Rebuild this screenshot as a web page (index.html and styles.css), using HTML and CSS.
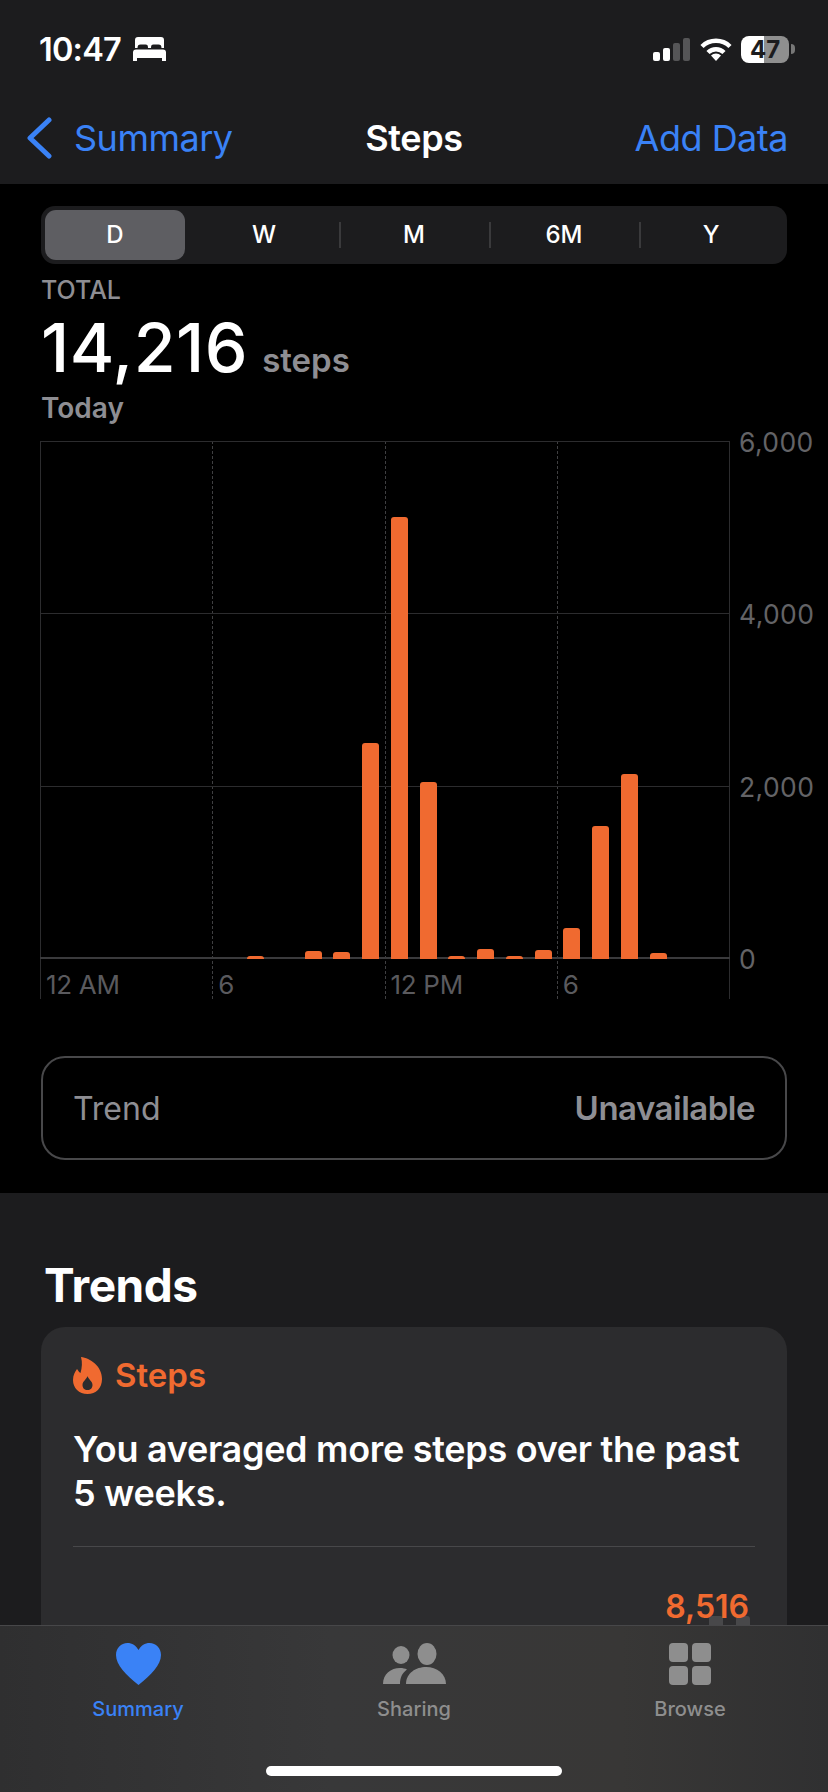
FILE: index.html
```html
<!DOCTYPE html>
<html lang="en">
<head>
<meta charset="UTF-8">
<meta name="viewport" content="width=device-width, initial-scale=1.0">
<title>Steps</title>
<link rel="stylesheet" href="styles.css">
</head>
<body>
<div class="screen">
    <div class="scroll">
        <header class="top">
            <div class="status">
                <div class="status-left">
                    <span class="time">10:47</span>
                    <svg class="bed" viewBox="0 0 33 24" fill="#fff" fill-rule="evenodd">
                        <path d="M5 0h23a3 3 0 0 1 3 3v8h-2.500c0-2.500-1-3.500-3-3.500h-5c-2 0-2.500 1-2.500 3.500h-3c0-2.500-.5-3.500-2.500-3.500h-5c-2 0-3 1-3 3.500H2V3a3 3 0 0 1 3-3z"/>
                        <path d="M3 12.500h27a3 3 0 0 1 3 3V21H0v-5.500a3 3 0 0 1 3-3z"/>
                        <rect x="0" y="21" width="4" height="3"/>
                        <rect x="29" y="21" width="4" height="3"/>
                    </svg>
                </div>
                <div class="status-right">
                    <div class="signal">
                        <span class="sig sig1"></span>
                        <span class="sig sig2"></span>
                        <span class="sig sig3"></span>
                        <span class="sig sig4"></span>
                    </div>
                    <svg class="wifi" viewBox="0 0 32 24" fill="none" stroke="#fff" stroke-width="4.500">
                        <path d="M2 9.500a20 20 0 0 1 28 0"/>
                        <path d="M8 15.500a11.500 11.500 0 0 1 16 0"/>
                        <path d="M16 24l-5-5.500a7 7 0 0 1 10 0z" fill="#fff" stroke="none"/>
                    </svg>
                    <div class="battery">
                        <div class="battery-body">47</div>
                        <div class="battery-nub"></div>
                    </div>
                </div>
            </div>
            <nav class="nav">
                <div class="back">
                    <svg class="chevron" viewBox="0 0 26 42" fill="none" stroke="#3a82f6" stroke-width="5" stroke-linecap="round" stroke-linejoin="round">
                        <path d="M23 3L4 21l19 18"/>
                    </svg>
                    <span>Summary</span>
                </div>
                <div class="nav-title">Steps</div>
                <div class="nav-action">Add Data</div>
            </nav>
        </header>

        <section class="detail">
            <div class="segments">
                <div class="seg active">D</div>
                <div class="seg">W</div>
                <div class="seg divided">M</div>
                <div class="seg divided">6M</div>
                <div class="seg divided">Y</div>
            </div>

            <div class="total-label">TOTAL</div>
            <div class="total"><span class="total-num">14,216</span><span class="total-unit">steps</span></div>
            <div class="total-date">Today</div>

            <div class="chart">
                <div class="plot">
                    <div class="vlines">
                        <div class="vcell">12 AM</div>
                        <div class="vcell">6</div>
                        <div class="vcell">12 PM</div>
                        <div class="vcell">6</div>
                    </div>
                    <div class="hlines">
                        <div class="hrow"></div>
                        <div class="hrow"></div>
                        <div class="hrow"></div>
                    </div>
                    <div class="bars">
                        <div></div><div></div><div></div><div></div><div></div><div></div><div></div>
                        <div class="bar" style="height: 3px"></div>
                        <div></div>
                        <div class="bar" style="height: 8px"></div>
                        <div class="bar" style="height: 7px"></div>
                        <div class="bar" style="height: 216px"></div>
                        <div class="bar" style="height: 442px"></div>
                        <div class="bar" style="height: 177px"></div>
                        <div class="bar" style="height: 3px"></div>
                        <div class="bar" style="height: 10px"></div>
                        <div class="bar" style="height: 3px"></div>
                        <div class="bar" style="height: 9px"></div>
                        <div class="bar" style="height: 31px"></div>
                        <div class="bar" style="height: 133px"></div>
                        <div class="bar" style="height: 185px"></div>
                        <div class="bar" style="height: 6px"></div>
                        <div></div><div></div>
                    </div>
                </div>
                <div class="ylabels">
                    <span>6,000</span>
                    <span>4,000</span>
                    <span>2,000</span>
                    <span>0</span>
                </div>
            </div>

            <div class="trend-box">
                <span class="trend-name">Trend</span>
                <span class="trend-value">Unavailable</span>
            </div>
        </section>

        <section class="trends">
            <h2>Trends</h2>
            <div class="card">
                <div class="card-head">
                    <svg class="flame" viewBox="0 0 29 37" fill="#f06a30" fill-rule="evenodd">
                        <path d="M8 0c9 1 21 9 21 22 0 9-6 15-14.500 15S0 31 0 23c0-5 2-8 4-11 1 1.500 2 3 3.500 4C9 11 9.500 5 8 0zM14.500 19c-.5 3-5 5-5 9 0 3 2 5 5 5s5-2 5-5c0-4-4.500-6-5-9z"/>
                    </svg>
                    <span>Steps</span>
                </div>
                <p class="card-text">You averaged more steps over the past 5 weeks.</p>
                <div class="card-line"></div>
                <div class="card-value">8,516</div>
                <div class="mini-bars">
                    <div class="mini-bar"></div>
                    <div class="mini-bar"></div>
                </div>
            </div>
        </section>
    </div>

    <footer class="tabbar">
        <div class="tabs">
            <div class="tab tab-on">
                <svg class="tab-icon" width="45" height="42" viewBox="0 0 45 42" fill="#3a82f6">
                    <path d="M22.500 42C10 32 0 22 0 12 0 5 5 0 11.500 0 16 0 20 2.500 22.500 7 25 2.500 29 0 33.500 0 40 0 45 5 45 12c0 10-10 20-22.500 30z"/>
                </svg>
                <span>Summary</span>
            </div>
            <div class="tab">
                <svg class="tab-icon" width="63" height="42" viewBox="0 0 63 42" fill="#8e8e8e">
                    <ellipse cx="18" cy="12" rx="8.500" ry="9"/>
                    <ellipse cx="44" cy="11" rx="9.500" ry="11"/>
                    <path d="M23 41c0-11 10-17 20-17 11 0 20 7 20 17z"/>
                    <path d="M0 41c0-10 8-16 17-16 3 0 5 .5 7 1.500C19 30 17 35 17 41z"/>
                </svg>
                <span>Sharing</span>
            </div>
            <div class="tab">
                <div class="tab-icon grid-icon">
                    <div></div><div></div><div></div><div></div>
                </div>
                <span>Browse</span>
            </div>
        </div>
        <div class="home"></div>
    </footer>
</div>
</body>
</html>
```

FILE: styles.css
```css
body {
    margin: 0;
    background-color: #000000;
    color: #ffffff;
    font-family: Inter, "Noto Sans", sans-serif;
}

.screen {
    width: 828px;
    height: 1792px;
    display: flex;
    flex-direction: column;
    overflow: hidden;
}

.scroll {
    flex: 1;
    min-height: 0;
    overflow: hidden;
}

/* status bar + nav */
.top {
    height: 184px;
    background-color: #1c1c1e;
}

.status {
    height: 92px;
    padding: 6px 33px 0 39px;
    box-sizing: border-box;
    display: flex;
    justify-content: space-between;
    align-items: center;
}

.status-left {
    display: flex;
    align-items: center;
    gap: 12px;
}

.time {
    font-size: 32.500px;
    font-weight: 600;
    letter-spacing: -0.8px;
}

.bed {
    width: 33px;
    height: 24px;
}

.status-right {
    display: flex;
    align-items: center;
}

.signal {
    display: flex;
    align-items: flex-end;
    gap: 3px;
    height: 23px;
    margin-right: 10px;
}

.sig {
    width: 7px;
    border-radius: 2px;
    background-color: #ffffff;
}

.sig1 { height: 9px; }
.sig2 { height: 13px; }
.sig3 { height: 18px; background-color: #555557; }
.sig4 { height: 23px; background-color: #555557; }

.wifi {
    width: 32px;
    height: 24px;
    margin-right: 9px;
}

.battery {
    display: flex;
    align-items: center;
    gap: 2px;
}

.battery-body {
    width: 48px;
    height: 27px;
    border-radius: 8px;
    background: linear-gradient(90deg, #ffffff 48%, #8f8f8f 48%);
    color: #1c1c1e;
    font-size: 24px;
    font-weight: 700;
    line-height: 27px;
    text-align: center;
}

.battery-nub {
    width: 4px;
    height: 10px;
    border-radius: 0 4px 4px 0;
    background-color: #777777;
}

.nav {
    height: 92px;
    padding: 0 33px;
    display: grid;
    grid-template-columns: 1fr auto 1fr;
    align-items: center;
    font-size: 36px;
    color: #3a82f6;
}

.back {
    display: flex;
    align-items: center;
    gap: 22px;
    margin-left: -7px;
}

.chevron {
    width: 26px;
    height: 42px;
}

.back span,
.nav-action {
    letter-spacing: -0.5px;
}

.nav-title {
    color: #ffffff;
    font-weight: 600;
    letter-spacing: -0.4px;
}

.nav-action {
    padding-right: 7px;
    text-align: right;
}

/* chart area */
.detail {
    height: 1009px;
    padding: 22px 41px 0 41px;
    box-sizing: border-box;
    background-color: #000000;
}

.segments {
    height: 58px;
    padding: 4px;
    box-sizing: border-box;
    background-color: #1c1c1e;
    border-radius: 14px;
    display: grid;
    grid-template-columns: 144px 150px 150px 150px 1fr;
    align-items: center;
}

.seg {
    height: 50px;
    line-height: 50px;
    text-align: center;
    font-size: 24px;
    font-weight: 500;
}

.seg.active {
    width: 140px;
    background-color: #5e5e62;
    border-radius: 11px;
}

.seg.divided {
    background: linear-gradient(#3a3a3c, #3a3a3c) left center / 2px 26px no-repeat;
}

.total-label {
    margin-top: 10px;
    font-size: 25px;
    line-height: 32px;
    font-weight: 500;
    color: #8e8e93;
}

.total {
    display: flex;
    align-items: baseline;
    height: 72px;
    line-height: 72px;
    margin-top: 5px;
}

.total-num {
    font-size: 68px;
    font-weight: 500;
    letter-spacing: 0.500px;
}

.total-unit {
    margin-left: 14px;
    font-size: 33px;
    font-weight: 600;
    color: #8e8e93;
}

.total-date {
    margin-top: 8px;
    font-size: 28px;
    line-height: 34px;
    font-weight: 600;
    color: #8e8e93;
}

.chart {
    margin-top: 16px;
    margin-left: -1px;
    margin-right: -41px;
    display: flex;
}

.plot {
    position: relative;
    flex: none;
    width: 690px;
    height: 558px;
}

/* vertical guides, hour labels sit inside the cells */
.vlines {
    position: absolute;
    inset: 0;
    display: grid;
    grid-template-columns: repeat(4, 1fr);
    border-right: 1px solid #2c2c2e;
}

.vcell {
    border-left: 1px dashed #3f3f41;
    padding: 530px 0 0 5px;
    box-sizing: border-box;
    font-size: 26px;
    line-height: 28px;
    color: #5a5a5e;
    white-space: nowrap;
    letter-spacing: -0.3px;
}

.vcell:first-child {
    border-left: 1px solid #2c2c2e;
}

.hlines {
    position: absolute;
    top: 0;
    left: 0;
    right: 0;
    height: 518px;
    display: grid;
    grid-template-rows: repeat(3, 1fr);
    border-top: 1px solid #2c2c2e;
    box-sizing: border-box;
}

.hrow {
    border-bottom: 1px solid #2c2c2e;
}

.hrow:last-child {
    border-bottom: 2px solid #3a3a3c;
}

.bars {
    position: absolute;
    top: 0;
    left: 0;
    right: 0;
    height: 518px;
    display: grid;
    grid-template-columns: repeat(24, 1fr);
    align-items: end;
}

.bar {
    width: 17px;
    justify-self: center;
    background-color: #f06a30;
    border-radius: 3px 3px 0 0;
}

.ylabels {
    height: 518px;
    margin-left: 9px;
    display: flex;
    flex-direction: column;
    justify-content: space-between;
    font-size: 26.500px;
    color: #636366;
    letter-spacing: 0.4px;
}

.ylabels span {
    height: 0;
    line-height: 0;
    margin-top: 1px;
}

.trend-box {
    height: 104px;
    margin-top: 57px;
    padding: 0 30px;
    box-sizing: border-box;
    border: 2px solid #48484a;
    border-radius: 24px;
    display: flex;
    align-items: center;
    justify-content: space-between;
    color: #8e8e93;
    font-size: 32px;
}

.trend-value {
    font-size: 33px;
    font-weight: 600;
    letter-spacing: -0.5px;
}

/* trends list */
.trends {
    background-color: #1c1c1e;
    padding: 62px 41px 0 41px;
}

.trends h2 {
    margin: 0 0 0 3px;
    font-size: 46px;
    line-height: 60px;
    font-weight: 700;
    letter-spacing: -0.5px;
}

.card {
    margin-top: 12px;
    height: 400px;
    padding: 28px 32px 0 32px;
    box-sizing: border-box;
    background-color: #2c2c2e;
    border-radius: 24px;
}

.card-head {
    display: flex;
    align-items: center;
    gap: 13px;
    color: #f06a30;
    font-size: 33px;
    font-weight: 600;
}

.flame {
    width: 29px;
    height: 37px;
}

.card-text {
    margin: 32px 0 0 0;
    font-size: 36px;
    line-height: 44px;
    font-weight: 600;
    letter-spacing: -0.3px;
}

.card-line {
    margin-top: 31px;
    height: 1px;
    background-color: #48484a;
}

.card-value {
    position: relative;
    z-index: 1;
    margin-top: 42px;
    padding-right: 6px;
    text-align: right;
    font-size: 32px;
    line-height: 36px;
    font-weight: 600;
    color: #f06a30;
}

.mini-bars {
    display: flex;
    justify-content: flex-end;
    gap: 13px;
    padding-right: 5px;
    margin-top: -9px;
}

.mini-bar {
    width: 14px;
    height: 30px;
    background-color: #48484a;
    border-radius: 3px 3px 0 0;
}

/* tab bar */
.tabbar {
    height: 167px;
    flex-shrink: 0;
    box-sizing: border-box;
    border-top: 1px solid #474749;
    background: linear-gradient(90deg, #2f2f30, #383839 40%, #383736 75%, #303031);
    display: flex;
    flex-direction: column;
    align-items: center;
}

.tabs {
    width: 100%;
    display: grid;
    grid-template-columns: repeat(3, 1fr);
    padding-top: 17px;
}

.tab {
    display: flex;
    flex-direction: column;
    align-items: center;
    color: #8e8e8e;
    font-size: 20px;
    font-weight: 500;
    line-height: 24px;
}

.tab-on {
    color: #3a82f6;
}

.tab-icon {
    height: 42px;
    margin-bottom: 12px;
}

.grid-icon {
    width: 42px;
    display: grid;
    grid-template-columns: 1fr 1fr;
    gap: 4px;
}

.grid-icon div {
    background-color: #8e8e8e;
    border-radius: 4px;
}

.home {
    width: 296px;
    height: 10px;
    margin-top: 45px;
    border-radius: 5px;
    background-color: #ffffff;
}
```
